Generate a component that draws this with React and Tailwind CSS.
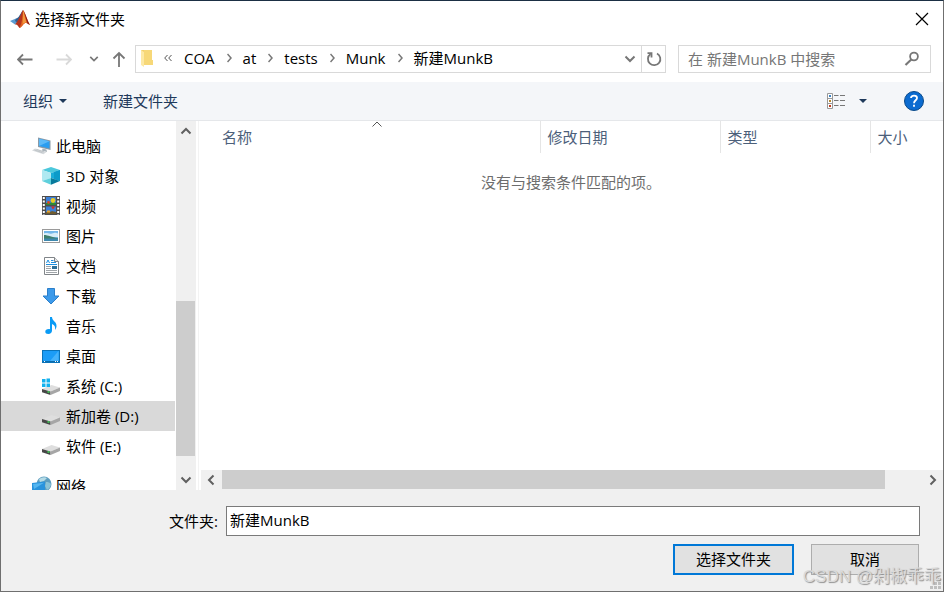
import React, { useState } from 'react';

const PLACES = [
  { id: 'pc', label: '此电脑', icon: PcIcon, root: true },
  { id: '3d', label: '3D 对象', icon: CubeIcon },
  { id: 'video', label: '视频', icon: FilmIcon },
  { id: 'pictures', label: '图片', icon: PictureIcon },
  { id: 'docs', label: '文档', icon: DocIcon },
  { id: 'downloads', label: '下载', icon: DownloadIcon },
  { id: 'music', label: '音乐', icon: MusicIcon },
  { id: 'desktop', label: '桌面', icon: DesktopIcon },
  { id: 'c', label: '系统 (C:)', icon: SystemDriveIcon },
  { id: 'd', label: '新加卷 (D:)', icon: DriveIcon },
  { id: 'e', label: '软件 (E:)', icon: DriveIcon },
];

const CRUMBS = ['COA', 'at', 'tests', 'Munk', '新建MunkB'];

function Icon({ children }) {
  return (
    <svg className="w-5 h-5 shrink-0" viewBox="0 0 20 20" fill="none" aria-hidden="true">
      {children}
    </svg>
  );
}

function PcIcon() {
  return (
    <Icon>
      <path d="M6 1.5 18.5 4.5V14L6 11Z" fill="#8a99a6" />
      <path d="M7 2.8 17.5 5.3V12.6L7 10.1Z" fill="#2a9df0" />
      <path d="M7 2.8 17.5 5.3 7 10.1Z" fill="#5cb9f7" />
      <path d="m10.5 12.5 4 1 .5 2.500-5-1.200Z" fill="#a9b3ba" />
      <path d="m0 14.500 3-2 11.500 3.500-3 2.200Z" fill="#d5d9dc" />
      <path d="m2.500 14 8 2.700M4.500 13.300l7.500 2.600" stroke="#b4babf" strokeWidth=".7" />
    </Icon>
  );
}

function CubeIcon() {
  return (
    <Icon>
      <path d="M9 1 18 4 9 7 0 4Z" fill="#4cc8dc" />
      <path d="M0 4 9 7V12L0 15Z" fill="#c5eff5" />
      <path d="M0 4 9 7V12L0 15Z" fill="#8fe0ea" fillOpacity=".4" />
      <path d="M18 4 9 7V12l9 3Z" fill="#18acd8" />
      <path d="M18 4 12 6V13l6 2Z" fill="#0b9bc9" />
      <path d="m0 15 9-3v6.800Z" fill="#5fd0dc" />
      <path d="m18 15-9-3v6.800Z" fill="#077a9c" />
    </Icon>
  );
}

function FilmIcon() {
  return (
    <Icon>
      <rect y="0" width="18" height="19" fill="#4d4d4d" />
      <path d="M1.800 1v18M16.200 1v18" stroke="#fff" strokeWidth="2" strokeDasharray="2 1.500" />
      <rect x="4" y="1" width="10" height="8" fill="#3c7fd6" />
      <rect x="4" y="10.500" width="10" height="7.500" fill="#3c7fd6" />
      <path d="M4 7h4l2-1 4 1v2H4Z" fill="#2f8a35" />
      <path d="M4 16h4l2-1 4 1v2H4Z" fill="#6f5c30" />
      <circle cx="11" cy="4.500" r="2.400" fill="#e8c928" />
      <circle cx="6.500" cy="6.500" r="1.400" fill="#d8491f" />
      <path d="M9 10.500h4l-2 3Z" fill="#d82f20" />
      <path d="M5 14.500h3v2H5Z" fill="#e8a22a" />
    </Icon>
  );
}

function PictureIcon() {
  return (
    <Icon>
      <rect x=".5" y="3.500" width="17" height="13" fill="#fff" stroke="#9a9a9a" />
      <rect x="2" y="5" width="14" height="10" fill="#74b7ea" />
      <path d="M2 7.500c3-1.500 5 1 8 0s4-1 6 0V11H2Z" fill="#d6ecf8" />
      <path d="M2 9c4 0 8 2.500 14 3v1H2Z" fill="#3f7f6d" />
      <path d="M2 12.500h14V15H2Z" fill="#3d88ae" />
    </Icon>
  );
}

function DocIcon() {
  return (
    <Icon>
      <path d="M2.500 1.500h10l4 4v13h-14Z" fill="#fff" stroke="#808589" />
      <path d="M12.500 1.500v4h4" fill="#e4e6e8" stroke="#808589" />
      <path d="m4.500 7 1.500-3L7.500 7" stroke="#1e8fe0" />
      <path d="M9 4.500h2.500M9 6.500h5M4 8.500h11" stroke="#1e8fe0" />
      <path d="M4 10.500h5M4 12.500h5M4 14.500h11M4 16.500h11" stroke="#a0a5a9" />
      <path d="M10 10h5v3h-5Z" fill="#2d6f98" />
    </Icon>
  );
}

function DownloadIcon() {
  return (
    <Icon>
      <path d="M5.500 2.500h7v7.500h4.500L9 18 1 10h4.500Z" fill="#3c9aea" stroke="#2b7fca" />
    </Icon>
  );
}

function MusicIcon() {
  return (
    <Icon>
      <path d="M8 1h2c0 4 5 4.500 4.500 9.500-.2 1.700-.8 2.500-1.500 3.500.5-3-.2-5-3-6v6.500c0 2-1.500 3.500-3.700 3.500-1.900 0-3-1-3-2.300C3.300 14 5 12.800 8 13.200Z" fill="#0a9bf5" />
    </Icon>
  );
}

function DesktopIcon() {
  return (
    <Icon>
      <rect x=".5" y="4.500" width="17" height="12" fill="#1b9cf7" stroke="#0b73b9" />
      <path d="M8 15 16.500 5v10Z" fill="#45b2fb" />
      <path d="M1 15.500h16" stroke="#0b6bab" />
      <path d="M2 15.500h1M13 15.500h1M15 15.500h1" stroke="#fff" />
    </Icon>
  );
}

function DriveShape() {
  return (
    <>
      <path d="M0 13 9.500 9 18 11.500 8.500 15.500Z" fill="#dedede" />
      <path d="M0 13 8.500 15.500V19L0 16.200Z" fill="#474747" />
      <path d="m8.500 15.500 9.500-4V15L8.500 19Z" fill="#a6a6a6" />
      <path d="M5.500 16h2" stroke="#3fe05a" strokeWidth="1.500" />
    </>
  );
}

function DriveIcon() {
  return (
    <Icon>
      <DriveShape />
    </Icon>
  );
}

function SystemDriveIcon() {
  return (
    <Icon>
      <DriveShape />
      <path d="M0 3h3.500v3.500H0ZM4.500 2.500H8v4H4.500ZM0 7.500h3.500V11H0ZM4.500 7.500H8V11H4.500Z" fill="#13b1ee" />
    </Icon>
  );
}

function NetworkIcon() {
  return (
    <Icon>
      <circle cx="12" cy="8" r="7.500" fill="#5d9dbf" />
      <path d="M7 3.500c2-2.500 6-3 8-1.500l-3 3-4 1Z" fill="#b5dbe6" />
      <path d="M14 6c2 0 4 .5 5 2-.3 3-2 5-4 6l-2-4Z" fill="#8cc3d6" />
      <path d="M0 7 13 5.500V16L0 14Z" fill="#2a93dc" />
      <path d="M1 8 12 6.700 2 13Z" fill="#55b6f0" />
      <path d="m4 15 6 1.500v2L3 17Z" fill="#a8b4bc" />
    </Icon>
  );
}

function MatlabLogo() {
  return (
    <svg className="w-5 h-5 shrink-0" viewBox="0 0 20 20" aria-hidden="true">
      <path d="M0 12 6 9.500l3 2.500-4 3.500Z" fill="#5b9bd0" />
      <path d="M6 9.500C9 9 10 5 13 1l-1 8-4 5-3-2Z" fill="#2f5f94" />
      <path d="M13 1c-2 3-3 8-8 14.500 2-.5 3 1.500 4.500 3.500C12 18 13 14 15 14Z" fill="#b5341d" />
      <path d="M13 1c2.500 3 4 10 7 15-2-1.500-4-2.500-5.500-1.500-1.500 1-3 4-5 4.500C12 14 12.500 8 13 1Z" fill="#e2601f" />
      <path d="M13 1c1.500 3 1.500 8 3.500 12.500-1.500 0-3 .5-4 2C13 10 13 6 13 1Z" fill="#f6b04a" fillOpacity=".7" />
      <path d="M13 1c2.500 3 4 10 7 15l-2.500-1.300C15.500 9 15 5 13 1Z" fill="#8c1c16" />
    </svg>
  );
}

function Chevron({ dir, className = 'w-3 h-3' }) {
  const paths = {
    up: 'M1.500 8.500 6 4l4.500 4.500',
    down: 'M1.500 3.500 6 8l4.500-4.500',
    left: 'M7.500 1.500 3 6l4.500 4.500',
    right: 'M3.500 1.500 8 6l-4.500 4.500',
  };
  return (
    <svg className={className} viewBox="0 0 12 12" fill="none" stroke="currentColor" strokeWidth="2" aria-hidden="true">
      <path d={paths[dir]} />
    </svg>
  );
}

function Caret() {
  return (
    <svg className="w-2 h-1" viewBox="0 0 8 4" fill="currentColor" aria-hidden="true">
      <path d="M0 0h8L4 4Z" />
    </svg>
  );
}

function TitleBar() {
  return (
    <header className="flex items-center h-[35px] shrink-0 pl-[9px] pr-3.5">
      <MatlabLogo />
      <h1 className="pl-[5px] text-[15px] leading-5">选择新文件夹</h1>
      <button aria-label="关闭" className="ml-auto">
        <svg className="w-3.5 h-3.5" viewBox="0 0 14 14" stroke="#000" strokeWidth="1.200">
          <path d="m1 1 12 12M13 1 1 13" />
        </svg>
      </button>
    </header>
  );
}

function AddressBar() {
  return (
    <div className="flex flex-1 min-w-0 h-7 border border-[#d9d9d9]">
      <ol className="flex flex-1 items-center gap-3 pl-1 pb-0.5 leading-5">
        <li className="flex items-center gap-2.5">
          <svg className="w-3.5 h-[18px]" viewBox="0 0 14 18" aria-hidden="true">
            <path d="M1 1h7v15H1Z" fill="#f3cf6b" />
            <path d="M4 1h8v10h1v5H4Z" fill="#f7d878" />
            <path d="m1 1 3 2v15l-3-2Z" fill="#fde9a5" />
          </svg>
          <svg className="w-2 h-2" viewBox="0 0 8 8" fill="none" stroke="#555" aria-hidden="true">
            <path d="M3.500 1 .7 4l2.800 3M7.500 1 4.700 4l2.800 3" />
          </svg>
        </li>
        {CRUMBS.map((name, i) => (
          <li key={name} className="flex items-center gap-[11px]">
            {i > 0 && (
              <svg className="w-[5px] h-2.5" viewBox="0 0 5 10" fill="none" stroke="#777" strokeWidth="1.500" aria-hidden="true">
                <path d="m.5 1 3.500 4-3.500 4" />
              </svg>
            )}
            <button>{name}</button>
          </li>
        ))}
      </ol>
      <button aria-label="以前的位置" className="px-[5px] text-[#777]">
        <Chevron dir="down" />
      </button>
      <button aria-label="刷新" className="flex items-center justify-center w-6 border-l border-[#d9d9d9]">
        <svg className="w-4 h-4" viewBox="0 0 16 16" fill="none" stroke="#777" strokeWidth="1.800" aria-hidden="true">
          <path d="M11 2.500A6.200 6.200 0 1 1 4.500 3" />
          <path d="M1.500 2.200h4v4.300" />
        </svg>
      </button>
    </div>
  );
}

function NavBar() {
  return (
    <nav className="flex items-center h-[46px] shrink-0 pr-3">
      <div className="flex items-center w-[134px] shrink-0 pl-4 text-[#777]">
        <button aria-label="后退">
          <svg className="w-4 h-4" viewBox="0 0 16 16" fill="none" stroke="currentColor" strokeWidth="1.800">
            <path d="M15.500 8.500H1M6 3.500l-5 5 5 5" />
          </svg>
        </button>
        <button aria-label="前进" disabled className="ml-[23px] text-[#d9d9d9]">
          <svg className="w-4 h-4" viewBox="0 0 16 16" fill="none" stroke="currentColor" strokeWidth="1.800">
            <path d="M.5 8.500H15M10 3.500l5 5-5 5" />
          </svg>
        </button>
        <button aria-label="最近的位置" className="ml-[17px]">
          <Chevron dir="down" className="w-2.5 h-2.5" />
        </button>
        <button aria-label="上移" className="ml-3">
          <svg className="w-4 h-4" viewBox="0 0 16 16" fill="none" stroke="currentColor" strokeWidth="1.800">
            <path d="M8 16V2M2.500 7.500 8 2l5.500 5.500" />
          </svg>
        </button>
      </div>
      <AddressBar />
      <label className="flex items-center w-[253px] h-7 ml-3 pl-[9px] pr-2.5 border border-[#d9d9d9]">
        <input
          type="search"
          aria-label="搜索"
          placeholder="在 新建MunkB 中搜索"
          className="flex-1 min-w-0 outline-none placeholder:text-[#767676]"
        />
        <svg className="w-4 h-4" viewBox="0 0 16 16" fill="none" stroke="#777" strokeWidth="1.800" aria-hidden="true">
          <circle cx="10" cy="5.500" r="3.900" />
          <path d="M7.300 8.500 1.500 14" strokeWidth="2.200" />
        </svg>
      </label>
    </nav>
  );
}

function Toolbar() {
  return (
    <div className="flex items-center h-[39px] shrink-0 pl-[22px] pr-[19px] bg-[#f4f6f9] border-b border-[#e5e7ea] text-[#1e395b]">
      <button className="flex items-center gap-1.5">
        组织
        <Caret />
      </button>
      <button className="ml-9">新建文件夹</button>
      <button aria-label="更改视图" className="flex items-center gap-3.5 ml-auto">
        <svg className="w-[18px] h-4" viewBox="0 0 18 16" aria-hidden="true">
          <path d="M.5.5h5v15h-5ZM.5 5.500h5M.5 10.500h5" fill="#fff" stroke="#999" />
          <path d="M2 2h2v2H2Z" fill="#3b82c4" />
          <path d="M2 7h2v2H2Z" fill="#b5872f" />
          <path d="M2 12h2v2H2Z" fill="#c03a1c" />
          <path d="M7 2.500h4.500M13 2.500h5M7 7.500h4.500M13 7.500h5M7 12.500h4.500M13 12.500h5" stroke="#777" />
        </svg>
        <Caret />
      </button>
      <button
        aria-label="帮助"
        className="flex items-center justify-center w-5 h-5 ml-[37px] rounded-full border border-[#0a4a8a] bg-[#0b6bd0]"
      >
        <svg className="w-2.5 h-3.5" viewBox="0 0 10 14" fill="none" stroke="#fff" strokeWidth="1.800" aria-hidden="true">
          <path d="M2 4c0-3.200 6-3.200 6 0 0 2.200-3 2.400-3 5.200M5 10.800v2" />
        </svg>
      </button>
    </div>
  );
}

function Sidebar() {
  const [selected, setSelected] = useState('d');

  return (
    <aside className="flex w-[195px] shrink-0 overflow-hidden">
      <ul className="flex-1 pt-2.5 mr-px overflow-hidden">
        {PLACES.map(({ id, label, icon: PlaceIcon, root }) => (
          <li key={id}>
            <button
              onClick={() => setSelected(id)}
              className={`flex items-center gap-1 w-full h-[30px] ${root ? 'pl-[31px]' : 'pl-[41px]'} ${selected === id ? 'bg-[#d9d9d9]' : ''}`}
            >
              <PlaceIcon />
              {label}
            </button>
          </li>
        ))}
        <li className="pt-2.5">
          <button className="flex items-center gap-1 w-full h-[30px] pl-[31px]">
            <NetworkIcon />
            网络
          </button>
        </li>
      </ul>
      <div className="flex flex-col w-5 bg-[#f0f0f0] text-[#606060]">
        <button aria-label="向上滚动" className="flex items-center justify-center h-5">
          <Chevron dir="up" />
        </button>
        <div className="grow-[160]" />
        <div className="grow-[155] mr-px bg-[#cdcdcd]" />
        <div className="grow-[14]" />
        <button aria-label="向下滚动" className="flex items-center justify-center h-5">
          <Chevron dir="down" />
        </button>
      </div>
    </aside>
  );
}

function FileList() {
  return (
    <main className="flex flex-col flex-1 min-w-0 ml-0.5 border-l border-[#f3f3f3]">
      <table className="w-full table-fixed">
        <thead>
          <tr className="h-8 text-left text-[#4c607a] [&>th]:font-normal">
            <th className="relative pl-[23px] border-r border-[#e5e5e5]">
              名称
              <svg className="absolute top-0 left-[173px] w-2.5 h-1.5" viewBox="0 0 10 6" fill="none" stroke="#555" aria-hidden="true">
                <path d="M.5 5.500 5 1l4.500 4.500" />
              </svg>
            </th>
            <th className="w-[180px] pl-[7px] border-r border-[#e5e5e5]">修改日期</th>
            <th className="w-[150px] pl-[7px] border-r border-[#e5e5e5]">类型</th>
            <th className="w-[73px] pl-[7px]">大小</th>
          </tr>
        </thead>
        <tbody>
          <tr>
            <td colSpan={4} className="pt-[19px] text-center text-[#6d6d6d]">没有与搜索条件匹配的项。</td>
          </tr>
        </tbody>
      </table>
      <div className="flex h-5 mt-auto ml-0.5 bg-[#f0f0f0] text-[#606060]">
        <button aria-label="向左滚动" className="flex items-center justify-center w-[21px]">
          <Chevron dir="left" />
        </button>
        <div className="grow-[663] mb-px bg-[#cdcdcd]" />
        <div className="grow-[37]" />
        <button aria-label="向右滚动" className="flex items-center justify-center w-[21px]">
          <Chevron dir="right" />
        </button>
      </div>
    </main>
  );
}

function Footer() {
  const [folder, setFolder] = useState('新建MunkB');

  return (
    <footer className="relative h-[101px] shrink-0 pt-4 pr-[23px] bg-[#f0f0f0]">
      <div className="flex items-center">
        <label htmlFor="folder" className="w-[225px] pr-2 text-right">文件夹:</label>
        <input
          id="folder"
          value={folder}
          onChange={(e) => setFolder(e.target.value)}
          className="flex-1 h-[30px] pl-[3px] pb-1 bg-white border border-[#7a7a7a] outline-none"
        />
      </div>
      <div className="flex justify-end gap-[17px] pt-2 pr-px">
        <button className="w-[121px] h-[31px] pb-0.5 bg-[#e1e1e1] border-2 border-[#0078d7]">选择文件夹</button>
        <button className="w-[108px] h-[31px] pb-0.5 bg-[#e1e1e1] border border-[#adadad]">取消</button>
      </div>
      <svg className="absolute right-0.5 bottom-0.5 w-3 h-3" viewBox="0 0 12 12" fill="#bfbfbf" aria-hidden="true">
        <path d="M9 1h3v3H9ZM5 5h3v3H5ZM9 5h3v3H9ZM1 9h3v3H1ZM5 9h3v3H5ZM9 9h3v3H9Z" />
      </svg>
      <span className="absolute right-0.5 bottom-1 text-[17px] leading-5 text-[#dadada] [text-shadow:1px_1px_1px_#8f8f8f] font-['Liberation_Sans','Noto_Sans_CJK_SC',sans-serif]">
        CSDN @剁椒乖乖
      </span>
    </footer>
  );
}

export default function App() {
  return (
    <div className="flex flex-col h-screen overflow-hidden bg-white border border-[#6f6f6f] border-t-[#1b2f44] text-black text-[15px] leading-5 font-['Open_Sans','Noto_Sans_CJK_SC',sans-serif]">
      <TitleBar />
      <NavBar />
      <Toolbar />
      <div className="flex flex-1 min-h-0">
        <Sidebar />
        <FileList />
      </div>
      <Footer />
    </div>
  );
}
